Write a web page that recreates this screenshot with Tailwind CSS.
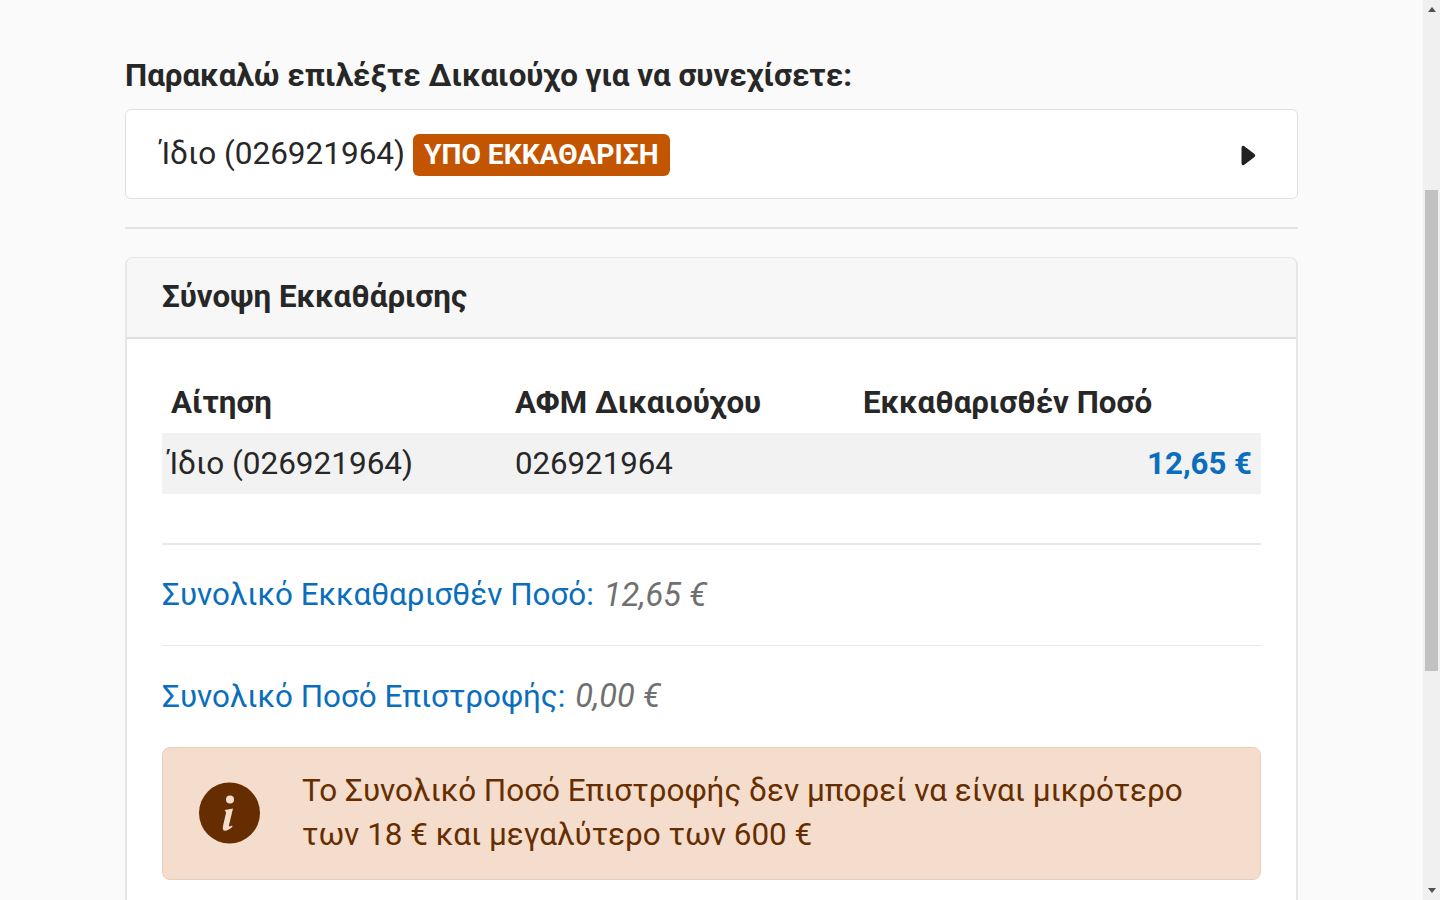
<!DOCTYPE html>
<html lang="en">
<head>
  <meta charset="UTF-8" />
  <meta name="viewport" content="width=device-width, initial-scale=1.0"/>
  <title>Σύνοψη Εκκαθάρισης</title>
  <script src="https://cdn.jsdelivr.net/npm/@tailwindcss/browser@4"></script>
</head>
<body class="bg-[#fafafa] text-[#272727] font-['Roboto',sans-serif] overflow-hidden">
  <div class="flex h-[900px] overflow-hidden">

    <main class="w-[1423px] h-[900px] overflow-hidden pl-[125px] pr-[125px] pt-[56px]">
      <h2 class="text-[31.33px] leading-[40px] font-bold mb-[13px]">Παρακαλώ επιλέξτε Δικαιούχο για να συνεχίσετε:</h2>

      <div class="h-[90px] bg-white border border-[#e0e0e0] rounded-[6px] pl-[33px] pr-[41px] flex items-center justify-between">
        <div class="flex items-center">
          <span class="text-[31.5px] mb-[1px] ml-[1px]">Ίδιο (026921964)</span>
          <span class="ml-[8px] mt-[2px] h-[42px] px-[11px] flex items-center bg-[#c45500] text-white text-[28.2px] font-bold rounded-[6px]">ΥΠΟ ΕΚΚΑΘΑΡΙΣΗ</span>
        </div>
        <svg width="15" height="21" viewBox="0 0 15 21" class="mt-[3px]"><path d="M0.5 3 Q0.5 0 3 1 L13.5 9 Q15 10.5 13.5 12 L3 20 Q0.5 21 0.5 18 Z" fill="#212121"/></svg>
      </div>

      <hr class="border-0 h-[2px] bg-[#e4e4e4] mt-[28px] mb-[28px]" />

      <section class="bg-white border-2 border-t border-[#e6e6e6] rounded-t-[8px] pb-[40px]">
        <div class="h-[81px] bg-[#f7f7f7] border-b-2 border-[#dedede] pl-[35px] pb-[1px] flex items-center rounded-t-[6px]">
          <h3 class="text-[31.33px] font-bold">Σύνοψη Εκκαθάρισης</h3>
        </div>

        <div class="px-[35px] pt-[41px]">
          <div class="grid grid-cols-[345px_348px_1fr] h-[53px] pb-[10px] items-center text-[31.3px] font-bold">
            <div class="pl-[9px]">Αίτηση</div>
            <div class="pl-[8px]">ΑΦΜ Δικαιούχου</div>
            <div class="pl-[8px]">Εκκαθαρισθέν Ποσό</div>
          </div>
          <div class="grid grid-cols-[345px_348px_1fr] h-[61px] pt-[1px] items-center bg-[#f2f2f2] text-[31.5px]">
            <div class="pl-[6px]">Ίδιο (026921964)</div>
            <div class="pl-[8px] text-[31.2px]">026921964</div>
            <div class="pr-[9px] text-right font-bold text-[31.2px] text-[#0a6ebd]">12,65 €</div>
          </div>

          <hr class="border-0 h-[2px] bg-[#e8e8e8] mt-[49px]" />
          <p class="h-[100px] flex items-center text-[31.4px] text-[#0a6ebd]">Συνολικό Εκκαθαρισθέν Ποσό:<em class="ml-[10px] text-[32.6px] text-[#707070]">12,65 €</em></p>
          <hr class="border-0 h-[1px] bg-[#e8e8e8]" />
          <p class="h-[101px] flex items-center text-[31.4px] text-[#0a6ebd]">Συνολικό Ποσό Επιστροφής:<em class="ml-[10px] mb-[1px] text-[32.6px] text-[#707070]">0,00 €</em></p>

          <div class="h-[133px] bg-[#f4ddcc] border border-[#eccdb6] rounded-[8px] pl-[36px] pr-[40px] pb-[1px] flex items-center">
            <svg width="61" height="62" viewBox="0 0 61 62" class="shrink-0">
              <circle cx="30.5" cy="31" r="30.5" fill="#662e00"/>
              <circle cx="31" cy="17.5" r="4" fill="#f4ddcc"/>
              <path d="M26 28 L34 26.5 L30 43 Q29.7 45.5 33 43.5 L33.5 44.7 Q29 48.7 26 48.7 Q23 48.7 24 44 L27 31 Q27.3 29 25.8 29 Z" fill="#f4ddcc"/>
            </svg>
            <p class="ml-[42px] text-[31.45px] leading-[44px] text-[#662e00]">Το Συνολικό Ποσό Επιστροφής δεν μπορεί να είναι μικρότερο των 18 € και μεγαλύτερο των 600 €</p>
          </div>
        </div>
      </section>
    </main>

    <!-- scrollbar -->
    <div class="w-[17px] h-[900px] bg-[#f0f0f0] flex flex-col items-center justify-between shrink-0">
      <div class="h-[190px] w-full flex justify-center pt-[7px]">
        <svg width="8" height="5" viewBox="0 0 8 5"><path d="M4 0 L8 5 H0Z" fill="#505050"/></svg>
      </div>
      <div class="w-[13px] h-[481px] bg-[#c1c1c1]"></div>
      <div class="h-[229px] w-full flex justify-center items-end pb-[7px]">
        <svg width="8" height="5" viewBox="0 0 8 5"><path d="M0 0 H8 L4 5Z" fill="#505050"/></svg>
      </div>
    </div>
  </div>
</body>
</html>
